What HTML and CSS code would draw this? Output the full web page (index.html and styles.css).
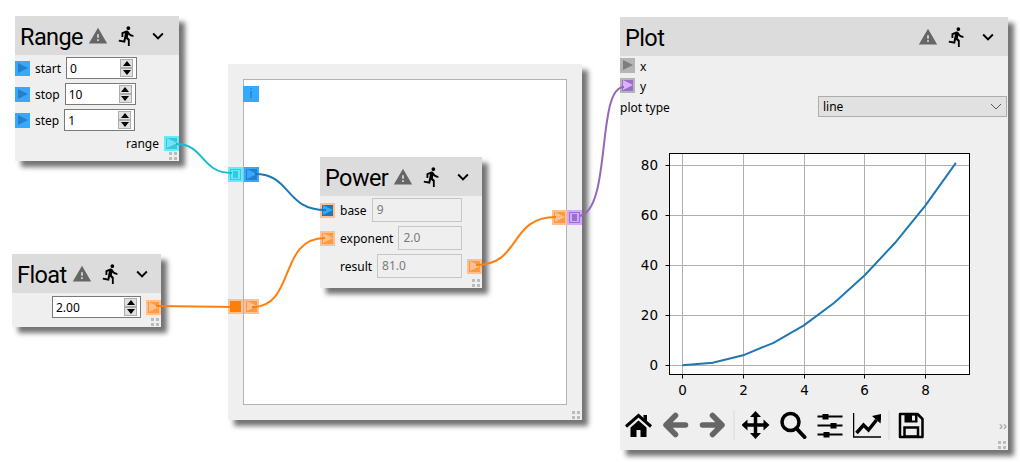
FILE: index.html
```html
<!DOCTYPE html>
<html lang="en">
<head>
    <meta charset="UTF-8">
    <title>Node editor</title>
    <link rel="stylesheet" href="styles.css">
</head>
<body>
    <svg class="defs" width="0" height="0">
        <symbol id="i-warn" viewBox="0 0 24 24"><path d="M1 21h22L12 2 1 21zm12-3h-2v-2h2v2zm0-4h-2v-4h2v4z"/></symbol>
        <symbol id="i-run" viewBox="0 0 24 24"><path d="M13.49 5.48c1.1 0 2-.9 2-2s-.9-2-2-2-2 .9-2 2 .9 2 2 2zm-3.6 13.9l1-4.4 2.1 2v6h2v-7.5l-2.1-2 .6-3c1.3 1.5 3.3 2.5 5.5 2.5v-2c-1.9 0-3.5-1-4.3-2.4l-1-1.6c-.4-.6-1-1-1.7-1-.3 0-.5.1-.8.1l-5.2 2.2v4.7h2v-3.4l1.8-.7-1.6 8.1-4.9-1-.4 2 7 1.4z"/></symbol>
        <symbol id="i-more" viewBox="0 0 24 24"><path d="M16.59 8.59L12 13.17 7.41 8.59 6 10l6 6 6-6z"/></symbol>
    </svg>

    <div class="canvas">
        <!-- macro frame, the ports sit on its edge -->
        <div class="macro">
            <div class="macro-inner"></div>
            <div class="grip"></div>
        </div>
        <div class="port port-blue port-info">i</div>
        <div class="port port-list port-cyan pin-in-range"></div>
        <div class="port port-dark pin-out-range"></div>
        <div class="port port-solid pin-in-float"></div>
        <div class="port port-orange pin-out-float"></div>
        <div class="port port-orange pin-in-result"></div>
        <div class="port port-list port-purple pin-out-result"></div>

        <div class="node node-range">
            <div class="head">
                <span class="title">Range</span>
                <svg class="ic-warn"><use href="#i-warn"/></svg>
                <svg class="ic-run"><use href="#i-run"/></svg>
                <svg class="ic-more"><use href="#i-more"/></svg>
            </div>
            <div class="body">
                <div class="row"><div class="port port-blue"></div><span>start</span><div class="spin spin-int"><span>0</span><div class="spin-btns"><i class="up"></i><i class="down"></i></div></div></div>
                <div class="row"><div class="port port-blue"></div><span>stop</span><div class="spin spin-int"><span>10</span><div class="spin-btns"><i class="up"></i><i class="down"></i></div></div></div>
                <div class="row"><div class="port port-blue"></div><span>step</span><div class="spin spin-int"><span>1</span><div class="spin-btns"><i class="up"></i><i class="down"></i></div></div></div>
                <div class="row row-out"><span>range</span><div class="port port-cyan"></div></div>
            </div>
            <div class="grip"></div>
        </div>

        <div class="node node-float">
            <div class="head">
                <span class="title">Float</span>
                <svg class="ic-warn"><use href="#i-warn"/></svg>
                <svg class="ic-run"><use href="#i-run"/></svg>
                <svg class="ic-more"><use href="#i-more"/></svg>
            </div>
            <div class="body">
                <div class="row row-out"><div class="spin spin-float"><span>2.00</span><div class="spin-btns"><i class="up"></i><i class="down"></i></div></div><div class="port port-orange"></div></div>
            </div>
            <div class="grip"></div>
        </div>

        <div class="node node-power">
            <div class="head">
                <span class="title">Power</span>
                <svg class="ic-warn"><use href="#i-warn"/></svg>
                <svg class="ic-run"><use href="#i-run"/></svg>
                <svg class="ic-more"><use href="#i-more"/></svg>
            </div>
            <div class="body">
                <div class="row"><div class="port port-base"></div><span>base</span><div class="field">9</div></div>
                <div class="row"><div class="port port-orange"></div><span>exponent</span><div class="field">2.0</div></div>
                <div class="row row-result"><span>result</span><div class="field">81.0</div><div class="port port-orange"></div></div>
            </div>
            <div class="grip"></div>
        </div>

        <div class="node node-plot">
            <div class="head">
                <span class="title">Plot</span>
                <svg class="ic-warn plot-warn"><use href="#i-warn"/></svg>
                <svg class="ic-run"><use href="#i-run"/></svg>
                <svg class="ic-more"><use href="#i-more"/></svg>
            </div>
            <div class="plot-ports">
                <div class="row"><div class="port port-grey"></div><span>x</span></div>
                <div class="row"><div class="port port-y"></div><span>y</span></div>
            </div>
            <div class="plot-type">
                <span>plot type</span>
                <div class="combo"><span>line</span>
                    <svg width="12" height="7" viewBox="0 0 12 7"><path d="M1 1l5 5 5-5" fill="none" stroke="#555"/></svg>
                </div>
            </div>

            <!-- viewBox uses page coordinates so the numbers read off the screenshot -->
            <svg class="figure" width="388" height="285" viewBox="620 120 388 285">
                <rect x="669.5" y="153.5" width="300" height="221" fill="#fff"/>
                <g class="grid">
                    <path d="M682.5 153.5V374.5M743.5 153.5V374.5M804.5 153.5V374.5M864.5 153.5V374.5M925.5 153.5V374.5"/>
                    <path d="M669.5 365.5H969.5M669.5 315.5H969.5M669.5 265.5H969.5M669.5 215.5H969.5M669.5 165.5H969.5"/>
                </g>
                <polyline class="curve" points="682.3,365.3 712.7,362.8 743.1,355.3 773.5,342.8 803.9,325.3 834.3,302.8 864.7,275.3 895.1,242.8 925.5,205.3 955.9,162.8"/>
                <rect class="frame" x="669.5" y="153.5" width="300" height="221"/>
                <path class="ticks" d="M682.5 374.5v4M743.5 374.5v4M804.5 374.5v4M864.5 374.5v4M925.5 374.5v4M669.5 365.5h-4M669.5 315.5h-4M669.5 265.5h-4M669.5 215.5h-4M669.5 165.5h-4"/>
                <g class="xlabels">
                    <text x="682.5" y="395">0</text>
                    <text x="743.5" y="395">2</text>
                    <text x="804.5" y="395">4</text>
                    <text x="864.5" y="395">6</text>
                    <text x="925.5" y="395">8</text>
                </g>
                <g class="ylabels">
                    <text x="658" y="370">0</text>
                    <text x="658" y="320">20</text>
                    <text x="658" y="270">40</text>
                    <text x="658" y="220">60</text>
                    <text x="658" y="170">80</text>
                </g>
            </svg>

            <div class="toolbar">
                <svg class="tool" viewBox="0 0 28 28">
                    <path d="M1.5 15.5L14 4.5l12.5 11" fill="none" stroke="#000" stroke-width="3"/>
                    <path d="M6 16.5L14 9.5l8 7V26h-6v-7h-4v7H6z"/>
                    <rect x="19" y="4" width="3.5" height="6"/>
                </svg>
                <svg class="tool" viewBox="0 0 28 28">
                    <path d="M24 14H6M14 4.5L4.5 14l9.5 9.5" fill="none" stroke="#666" stroke-width="5.5" stroke-linejoin="round" stroke-linecap="round"/>
                </svg>
                <svg class="tool" viewBox="0 0 28 28">
                    <path d="M4 14h18M14 4.5l9.5 9.5-9.5 9.5" fill="none" stroke="#666" stroke-width="5.5" stroke-linejoin="round" stroke-linecap="round"/>
                </svg>
                <div class="tool-sep"></div>
                <svg class="tool" viewBox="0 0 28 28">
                    <path d="M14 4v20M4 14h20" fill="none" stroke="#000" stroke-width="3.5"/>
                    <path d="M14 0l5.5 6h-11zM14 28l-5.5-6h11zM0 14l6-5.5v11zM28 14l-6 5.5v-11z"/>
                </svg>
                <svg class="tool" viewBox="0 0 28 28">
                    <circle cx="12" cy="11" r="8.5" fill="none" stroke="#000" stroke-width="3.5"/>
                    <path d="M18 17.5l8 8.5" stroke="#000" stroke-width="4" stroke-linecap="round"/>
                </svg>
                <svg class="tool" viewBox="0 0 28 28">
                    <path d="M2 5.5h25M2 14.5h25M2 23.5h25" stroke="#000" stroke-width="1.8"/>
                    <rect x="7" y="3" width="6" height="5.5"/>
                    <rect x="15" y="12" width="6" height="5.5"/>
                    <rect x="8" y="21" width="6" height="5.5"/>
                </svg>
                <svg class="tool" viewBox="0 0 28 28">
                    <path d="M1 2v24h28" fill="none" stroke="#000" stroke-width="1.5"/>
                    <path d="M4 22l7-8 5 5 8-10" fill="none" stroke="#000" stroke-width="3.5"/>
                    <path d="M19.5 5L29 3l-1 9.5z"/>
                </svg>
                <div class="tool-sep tool-sep-last"></div>
                <svg class="tool" viewBox="0 0 28 28">
                    <path d="M3.5 3H21l5 5v18H3.5z" fill="none" stroke="#000" stroke-width="2.5" stroke-linejoin="round"/>
                    <path d="M8 3h13v8.5H8zM15.5 4.5v5h3v-5z" fill-rule="evenodd"/>
                    <rect x="8" y="16.5" width="13.5" height="9" fill="none" stroke="#000" stroke-width="2.5"/>
                </svg>
                <span class="tool-more">&rsaquo;&rsaquo;</span>
            </div>
            <div class="grip"></div>
        </div>

        <svg class="wires" width="1020" height="462">
            <path class="wire-cyan" d="M176 144C205 144 200 173 232 173"/>
            <path class="wire-blue" d="M255 174C292 174 284 210 326 210"/>
            <path class="wire-orange" d="M156 306L236 307"/>
            <path class="wire-orange" d="M252 307C296 307 278 238 325 238"/>
            <path class="wire-orange" d="M476 265C522 265 508 217 556 217"/>
            <path class="wire-purple" d="M580 216C612 208 596 87 624 87"/>
        </svg>
    </div>
</body>
</html>
```

FILE: styles.css
```css
body {
    margin: 0;
    background-color: #fff;
    font-family: "Noto Sans", "Open Sans", sans-serif;
    font-size: 12px;
    color: #000;
}

.defs {
    display: block;
}

.canvas {
    position: relative;
    width: 1020px;
    height: 462px;
    overflow: hidden;
}

/* nodes */
.node {
    position: absolute;
    background-color: #efefef;
    box-shadow: 6px 6px 5px rgba(0, 0, 0, 0.55);
}

.node-range { left: 15px; top: 16px; width: 164px; height: 145px; }
.node-float { left: 12px; top: 254px; width: 149px; height: 73px; }
.node-power { left: 320px; top: 157px; width: 162px; height: 131px; }
.node-plot { left: 620px; top: 17px; width: 388px; height: 433px; }

.head {
    display: flex;
    align-items: center;
    height: 39px;
    padding-left: 5px;
    background-color: #dcdcdc;
}

.title {
    padding-top: 4px;
    font-family: Roboto, "Noto Sans", sans-serif;
    font-size: 23.5px;
    line-height: 35px;
    letter-spacing: -0.6px;
}

.ic-warn {
    width: 20px;
    height: 20px;
    margin-left: 5px;
    fill: #666;
}

.plot-warn {
    margin-left: auto;
}

.ic-run {
    width: 22px;
    height: 22px;
    margin-left: 8px;
}

.ic-more {
    width: 22px;
    height: 22px;
    margin-left: 9px;
    margin-right: 1px;
}

.node-plot .head {
    padding-right: 8px;
}

.grip {
    position: absolute;
    right: 2px;
    bottom: 1px;
    width: 8px;
    height: 8px;
    background-image:
        linear-gradient(#bbb, #bbb), linear-gradient(#bbb, #bbb),
        linear-gradient(#bbb, #bbb), linear-gradient(#bbb, #bbb);
    background-size: 3px 3px;
    background-repeat: no-repeat;
    background-position: 0 0, 5px 0, 0 5px, 5px 5px;
}

.row {
    display: flex;
    align-items: center;
    gap: 5px;
}

.body {
    display: flex;
    flex-direction: column;
    gap: 4px;
    padding-top: 2px;
}

.row-out {
    justify-content: flex-end;
}

/* ports */
.port {
    --ring: #35a9ff;
    --box: #35a9ff;
    --tri: #2a7fc4;
    position: relative;
    flex: none;
    width: 15px;
    height: 15px;
    background-color: var(--ring);
}

.port::before {
    content: "";
    position: absolute;
    inset: 2px;
    background-color: var(--box);
}

.port::after {
    content: "";
    position: absolute;
    left: 3px;
    top: 2px;
    border-left: 10px solid var(--tri);
    border-top: 5.5px solid transparent;
    border-bottom: 5.5px solid transparent;
}

.port-cyan { --ring: #5eeeff; --box: #3cc6da; --tri: #6fe6f6; }
.port-orange { --ring: #ffc08d; --box: #ff9a42; --tri: #ffc08d; }
.port-dark { --ring: #35a9ff; --box: #2a7fc4; --tri: #35a9ff; }
.port-base { --ring: #ffc08d; --box: #1f77b4; --tri: #35a9ff; }
.port-grey { --ring: #b5b5b5; --box: #b5b5b5; --tri: #7e7e7e; }
.port-y { --ring: #b5b5b5; --box: #9a6fc9; --tri: #d9b3ff; }
.port-purple { --ring: #d3a8ff; --box: #9a6fc9; --tri: #d3a8ff; }

.port-solid { --ring: #ffc08d; --box: #ff7f0e; }
.port-solid::after { display: none; }

/* list ports: a ring with a bar in the middle */
.port-list::before {
    box-sizing: border-box;
    background-color: var(--ring);
    border: 1px solid var(--box);
}

.port-list::after {
    left: 5px;
    top: 4px;
    width: 5px;
    height: 7px;
    border: none;
    background-color: var(--box);
}

.port-info {
    position: absolute;
    left: 243px;
    top: 86px;
    width: 16px;
    height: 16px;
    text-align: center;
    line-height: 16px;
    color: #1f77b4;
}

.port-info::before,
.port-info::after {
    display: none;
}

/* ports on the macro frame, free canvas */
.pin-in-range { position: absolute; left: 228px; top: 167px; }
.pin-out-range { position: absolute; left: 244px; top: 167px; }
.pin-in-float { position: absolute; left: 228px; top: 299px; }
.pin-out-float { position: absolute; left: 244px; top: 299px; }
.pin-in-result { position: absolute; left: 552px; top: 210px; }
.pin-out-result { position: absolute; left: 567px; top: 210px; }

/* inputs */
.spin {
    display: flex;
    align-items: center;
    justify-content: space-between;
    box-sizing: border-box;
    height: 22px;
    padding: 0 3px;
    background-color: #fff;
    border: 1px solid #7a7a7a;
}

.spin-int { width: 71px; }
.spin-float { width: 89px; }

.spin-btns {
    display: flex;
    flex-direction: column;
}

.spin-btns i {
    display: block;
    position: relative;
    box-sizing: border-box;
    width: 13px;
    height: 9px;
    background-color: #e1e1e1;
    border: 1px solid #adadad;
}

.spin-btns i::after {
    content: "";
    position: absolute;
    left: 1.5px;
    border-left: 4px solid transparent;
    border-right: 4px solid transparent;
}

.spin-btns .up::after {
    top: 1px;
    border-bottom: 5px solid #000;
}

.spin-btns .down::after {
    top: 1px;
    border-top: 5px solid #000;
}

.node-float .row-out {
    padding-top: 1px;
}

.node-power .row {
    padding-right: 20px;
}

.node-power .row-result {
    padding-left: 20px;
    padding-right: 0;
}

.field {
    flex: 1;
    box-sizing: border-box;
    height: 24px;
    padding: 0 4px;
    line-height: 22px;
    color: #7a7a7a;
    border: 1px solid #c6c6c6;
}

/* plot node */
.plot-ports {
    display: flex;
    flex-direction: column;
    gap: 5px;
    padding-top: 2px;
}

.plot-ports .row {
    height: 15px;
}

.plot-ports span,
.plot-type > span {
    padding-top: 2px;
}

.plot-type {
    display: flex;
    align-items: center;
    justify-content: space-between;
    height: 21px;
    margin-top: 3px;
}

.combo {
    display: flex;
    align-items: center;
    justify-content: space-between;
    box-sizing: border-box;
    width: 189px;
    height: 21px;
    margin-right: 1px;
    padding: 0 4px;
    background-color: #e1e1e1;
    border: 1px solid #adadad;
}

.figure {
    display: block;
    margin-top: 3px;
}

.grid path {
    fill: none;
    stroke: #b0b0b0;
    stroke-width: 1;
}

.curve {
    fill: none;
    stroke: #1f77b4;
    stroke-width: 2;
}

.frame {
    fill: none;
    stroke: #000;
    stroke-width: 1;
}

.ticks {
    stroke: #000;
    stroke-width: 1;
}

.xlabels text,
.ylabels text {
    font-family: "DejaVu Sans", sans-serif;
    font-size: 13.5px;
    fill: #000;
}

.xlabels text { text-anchor: middle; }
.ylabels text { text-anchor: end; }

.toolbar {
    position: relative;
    display: flex;
    align-items: center;
    height: 40px;
}

.tool {
    flex: none;
    width: 28px;
    height: 28px;
    padding: 0 4.5px;
}

.tool-sep {
    flex: none;
    width: 2px;
    height: 30px;
    margin: 0 2px;
    background-color: #e4e4e4;
}

.tool-sep-last {
    margin-left: 3px;
}

.tool-more {
    position: absolute;
    right: 1px;
    bottom: 13px;
    font-size: 13px;
    line-height: 14px;
    color: #999;
}

/* macro frame */
.macro {
    position: absolute;
    left: 228px;
    top: 64px;
    box-sizing: border-box;
    width: 354px;
    height: 356px;
    padding: 15px;
    background-color: #efefef;
    box-shadow: 6px 6px 5px rgba(0, 0, 0, 0.55);
}

.macro-inner {
    box-sizing: border-box;
    height: 100%;
    background-color: #fff;
    border: 1px solid #b3b3b3;
}

/* wires go over everything */
.wires {
    position: absolute;
    left: 0;
    top: 0;
    pointer-events: none;
}

.wires path {
    fill: none;
    stroke-width: 2;
}

.wire-cyan { stroke: #17becf; }
.wire-blue { stroke: #1f77b4; }
.wire-orange { stroke: #ff7f0e; }
.wire-purple { stroke: #9467bd; }
```
